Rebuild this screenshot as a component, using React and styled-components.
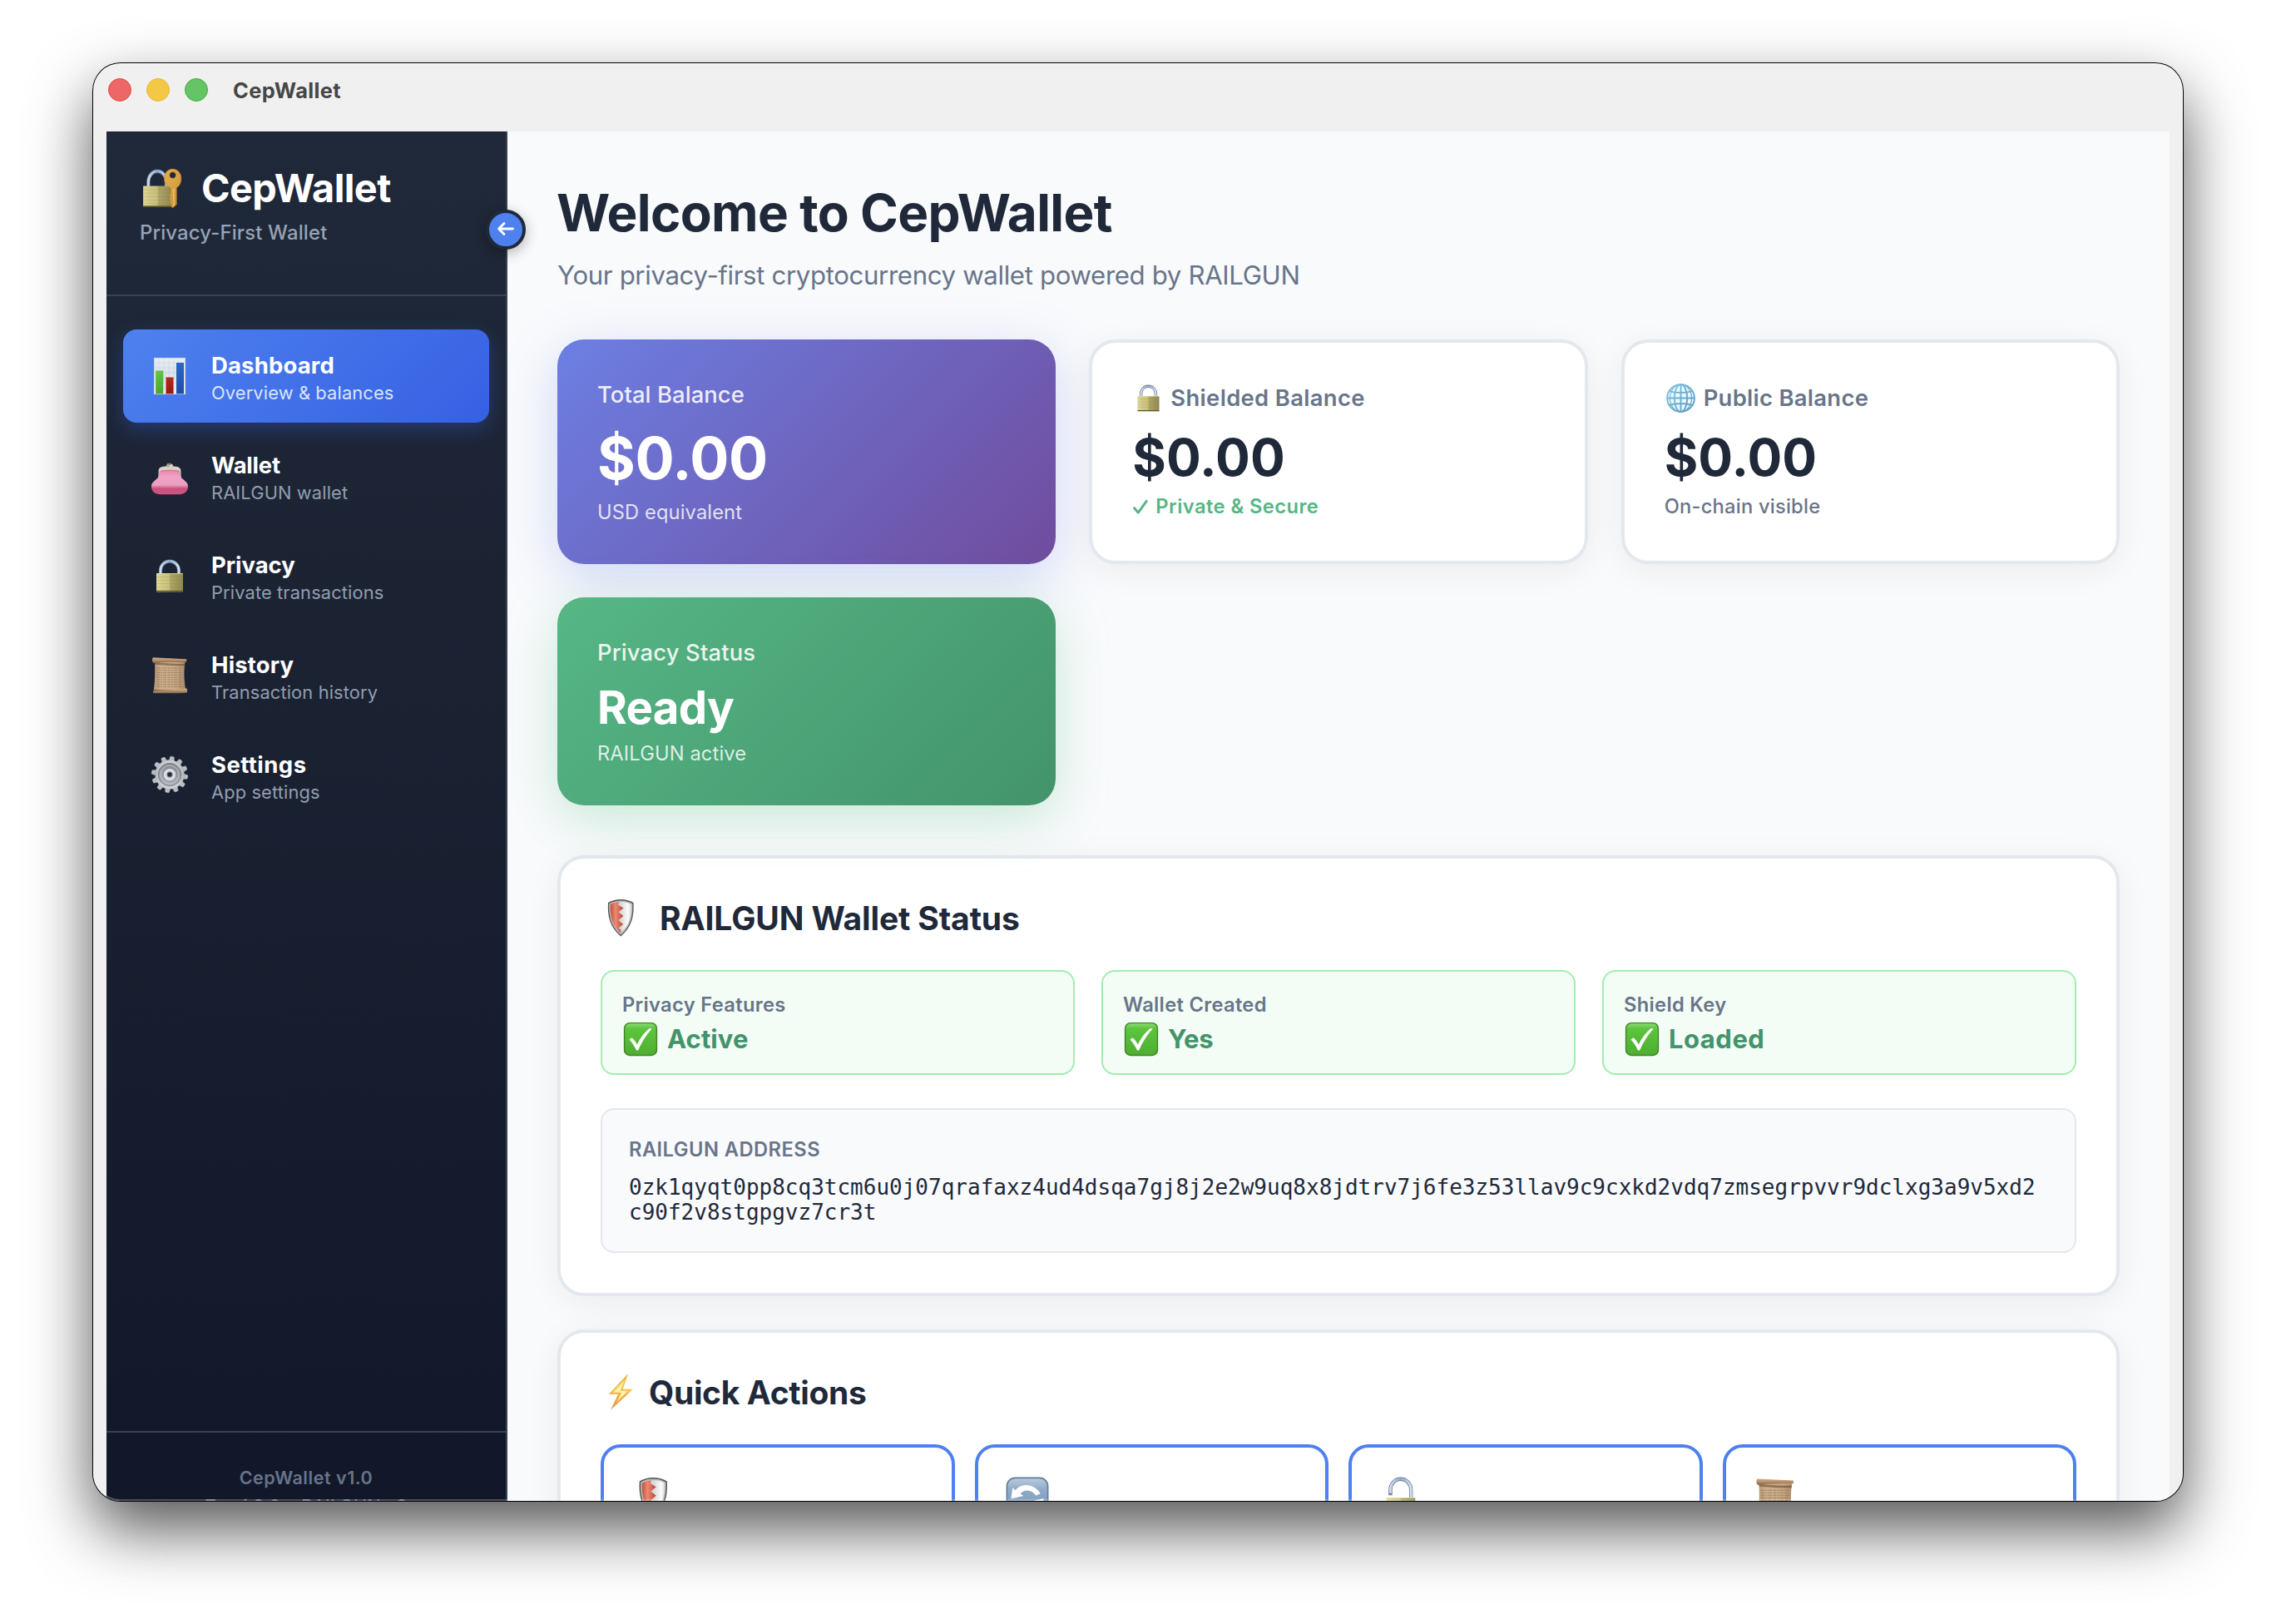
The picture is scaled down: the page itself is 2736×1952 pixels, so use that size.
import React from "react";
import styled, { createGlobalStyle, css } from "styled-components";

const GlobalStyle = createGlobalStyle`
  * { box-sizing: border-box; }
  html, body { margin: 0; padding: 0; background: #fff; }
  body {
    font-family: Inter, "Noto Sans", sans-serif;
    -webkit-font-smoothing: antialiased;
  }
  h1, h2, p { margin: 0; }
  button { font: inherit; }
`;

/* ---------- window ---------- */

const Desktop = styled.div`
  width: 2736px;
  height: 1952px;
  padding: 76px 112px;
  overflow: hidden;
  background: #fff;
`;

const Window = styled.div`
  position: relative;
  width: 2512px;
  height: 1728px;
  border-radius: 33px;
  background: #f0f0f0;
  box-shadow: 0 0 0 1px #000, 0 34px 76px rgba(0, 0, 0, 0.67);
  &::after {
    content: "";
    position: absolute;
    inset: 0;
    border-radius: inherit;
    box-shadow: inset 0 0 0 2px rgba(255, 255, 255, 0.24);
    pointer-events: none;
    z-index: 5;
  }
`;

const WindowClip = styled.div`
  height: 100%;
  overflow: hidden;
  border-radius: inherit;
`;

const TitleBar = styled.header`
  display: flex;
  align-items: flex-start;
  height: 82px;
  padding: 18px 0 0 18px;
`;

const Lights = styled.div`
  display: flex;
  gap: 18px;
  margin-right: 30px;
`;

const Light = styled.span`
  width: 28px;
  height: 28px;
  border-radius: 50%;
  border: 1px solid ${(p) => p.$edge};
  background: ${(p) => p.$fill};
`;

const WindowTitle = styled.div`
  font-size: 25.4px;
  font-weight: 700;
  line-height: 30px;
  letter-spacing: 0.4px;
  color: #464646;
`;

const Body = styled.div`
  display: flex;
  align-items: flex-start;
  padding: 0 16px;
`;

/* ---------- sidebar ---------- */

const Sidebar = styled.aside`
  position: relative;
  z-index: 2;
  display: flex;
  flex: none;
  flex-direction: column;
  width: 482px;
  height: 1692px;
  border-right: 2px solid #374253;
  background: linear-gradient(180deg, #202939 0%, #111728 100%);
`;

const Brand = styled.div`
  height: 198px;
  padding: 40px 40px 0;
  border-bottom: 2px solid #374253;
`;

const BrandRow = styled.div`
  display: flex;
  align-items: center;
  height: 56px;
  gap: 22px;
  margin-left: 2px;
`;

const BrandName = styled.div`
  font-size: 46.8px;
  font-weight: 700;
  line-height: 56px;
  letter-spacing: -0.6px;
  color: #fff;
`;

const BrandTag = styled.div`
  margin-top: 11px;
  font-size: 23.8px;
  font-weight: 500;
  line-height: 30px;
  letter-spacing: 0.2px;
  color: #97a3b6;
`;

const Toggle = styled.button`
  position: absolute;
  top: 94px;
  right: -24px;
  display: flex;
  align-items: center;
  justify-content: center;
  width: 48px;
  height: 48px;
  padding: 0;
  border: 4px solid #202939;
  border-radius: 50%;
  background: #4e80ee;
  box-shadow: 0 4px 16px rgba(0, 0, 0, 0.3);
`;

const Nav = styled.nav`
  display: flex;
  flex: 1;
  flex-direction: column;
  gap: 8px;
  padding: 40px 20px 0;
`;

const NavItem = styled.a`
  display: flex;
  align-items: center;
  gap: 26px;
  height: 112px;
  padding: 0 32px;
  border-radius: 16px;
  ${(p) =>
    p.$active &&
    css`
      background: linear-gradient(135deg, #4e81ee 0%, #3660e3 100%);
      box-shadow: 0 8px 24px rgba(59, 110, 246, 0.3);
    `}
`;

const NavText = styled.div`
  display: flex;
  flex-direction: column;
  height: 112px;
  padding-top: 25px;
`;

const NavLabel = styled.div`
  font-size: 27.4px;
  font-weight: 660;
  line-height: 36px;
  letter-spacing: ${(p) => p.$ls}px;
  color: #fff;
  white-space: nowrap;
`;

const NavHint = styled.div`
  margin-top: 1px;
  font-size: 21.8px;
  font-weight: 430;
  line-height: 28px;
  letter-spacing: 0.15px;
  color: ${(p) => (p.$active ? "#dbe5fb" : "#929db0")};
  white-space: nowrap;
`;

const SideFooter = styled.div`
  height: 130px;
  padding-top: 37px;
  border-top: 2px solid #374253;
  text-align: center;
  font-size: 21.5px;
  line-height: 34px;
  letter-spacing: 0.2px;
  color: #67748a;
`;

const Version = styled.div`
  font-weight: 600;
  letter-spacing: 0.54px;
`;

/* ---------- main ---------- */

const Main = styled.main`
  flex: 1;
  height: 1692px;
  padding: 60px 60px 0;
  background: #f9fafc;
`;

const PageTitle = styled.h1`
  margin-left: -1px;
  font-size: 62px;
  font-weight: 700;
  line-height: 75px;
  letter-spacing: -0.68px;
  color: #202939;
`;

const PageLead = styled.p`
  margin: 18px 0 57px;
  font-size: 31.2px;
  line-height: 40px;
  letter-spacing: -0.36px;
  color: #68758a;
`;

const CardGrid = styled.section`
  display: grid;
  grid-template-columns: repeat(3, 1fr);
  grid-template-rows: 270px 250px;
  gap: 40px;
  margin-bottom: 60px;
`;

const cardTones = {
  plain: css`
    padding: 48px;
    border: 4px solid #e3e8ef;
    background: #fff;
    box-shadow: 0 8px 40px rgba(0, 0, 0, 0.06);
  `,
  purple: css`
    padding: 48px;
    background: linear-gradient(135deg, #6c7fe3 0%, #704c9d 100%);
    box-shadow: 0 16px 64px rgba(102, 126, 234, 0.28);
  `,
  green: css`
    padding: 48px;
    background: linear-gradient(135deg, #56b785 0%, #43936b 100%);
    box-shadow: 0 16px 64px rgba(72, 187, 120, 0.28);
  `,
};

const Card = styled.article`
  border-radius: 32px;
  color: ${(p) => (p.$tone === "plain" ? "#202939" : "#fff")};
  ${(p) => cardTones[p.$tone]}
`;

const CardLabel = styled.div`
  display: flex;
  align-items: center;
  height: 37px;
  font-size: 27.4px;
  line-height: 37px;
  font-weight: ${(p) => (p.$muted ? 620 : 500)};
  letter-spacing: ${(p) => p.$ls}px;
  color: ${(p) => (p.$muted ? "#68758a" : "rgba(255, 255, 255, 0.9)")};
`;

const figureSizes = {
  large: css`
    margin-top: 16px;
    font-size: 70px;
    line-height: 84px;
    letter-spacing: -0.38px;
  `,
  medium: css`
    margin-top: 15px;
    font-size: 62px;
    line-height: 76px;
    letter-spacing: 0.1px;
  `,
  word: css`
    margin-top: 13px;
    font-size: 54.5px;
    line-height: 68px;
    letter-spacing: -0.67px;
  `,
};

const Figure = styled.div`
  font-weight: 700;
  ${(p) => figureSizes[p.$size]}
`;

const noteTones = {
  light: css`
    color: rgba(255, 255, 255, 0.82);
    letter-spacing: 0.12px;
  `,
  good: css`
    color: #56b685;
    font-weight: 620;
    letter-spacing: 0.45px;
  `,
  muted: css`
    color: #68758a;
    font-weight: 500;
    letter-spacing: 0.22px;
  `,
};

const CardNote = styled.div`
  display: flex;
  align-items: center;
  margin-top: ${(p) => p.$gap}px;
  font-size: 23.7px;
  line-height: 30px;
  ${(p) => noteTones[p.$tone]}
`;

const Panel = styled.section`
  height: ${(p) => p.$height}px;
  margin-bottom: 40px;
  padding: 48px;
  border: 4px solid #e3e8ef;
  border-radius: 32px;
  background: #fff;
  box-shadow: 0 8px 40px rgba(0, 0, 0, 0.06);
`;

const PanelTitle = styled.h2`
  display: flex;
  align-items: center;
  gap: ${(p) => p.$gap}px;
  height: 48px;
  margin-bottom: 38px;
  font-size: 39px;
  font-weight: 700;
  line-height: 48px;
  letter-spacing: ${(p) => p.$ls}px;
  color: #202939;
`;

const StatusGrid = styled.div`
  display: grid;
  grid-template-columns: repeat(3, 1fr);
  gap: 32px;
`;

const StatusBox = styled.div`
  height: 126px;
  padding: 24.5px 24px 0;
  border: 2px solid #a3ecb2;
  border-radius: 16px;
  background: #f3fdf5;
`;

const FieldLabel = styled.div`
  font-size: 23.7px;
  font-weight: 600;
  line-height: 30px;
  letter-spacing: ${(p) => p.$ls ?? 0.32}px;
  color: #68758a;
`;

const StatusValue = styled.div`
  display: flex;
  align-items: center;
  gap: 11px;
  height: 40px;
  margin-top: 6px;
  font-size: 31px;
  font-weight: 700;
  line-height: 40px;
  letter-spacing: ${(p) => p.$ls}px;
  color: #43936b;
`;

const AddressBox = styled.div`
  height: 174px;
  margin-top: 40px;
  padding: 32.5px 32px 0;
  border: 2px solid #e3e8ef;
  border-radius: 16px;
  background: #f9fafc;
`;

const Address = styled.div`
  margin-top: 15px;
  font-family: "DejaVu Sans Mono", monospace;
  font-size: 26px;
  line-height: 30px;
  color: #202939;
  white-space: nowrap;
`;

const ActionGrid = styled.div`
  display: grid;
  grid-template-columns: repeat(4, 1fr);
  gap: 24px;
`;

const Action = styled.div`
  display: flex;
  align-items: flex-start;
  height: 200px;
  padding: 35px 33px;
  border: 4px solid #4e80ee;
  border-radius: 24px;
  background: #fff;
`;

/* ---------- icons ---------- */

const Glyph = styled.svg`
  display: block;
  flex: none;
  width: ${(p) => p.$size}px;
  height: ${(p) => p.$size}px;
  margin: ${(p) => p.$margin ?? "0"};
  overflow: visible;
`;

const Icon = ({ size = 48, margin, children }) => (
  <Glyph viewBox="0 0 48 48" $size={size} $margin={margin} aria-hidden="true">
    {children}
  </Glyph>
);

const Gradients = styled.svg`
  position: absolute;
  width: 0;
  height: 0;
`;

const Defs = () => (
  <Gradients>
    <defs>
      <linearGradient id="brass" x1="0" x2="1" y1="0" y2="0">
        <stop offset="0" stopColor="#e0d996" />
        <stop offset="0.2" stopColor="#d3ca86" />
        <stop offset="0.48" stopColor="#c8c07c" />
        <stop offset="0.52" stopColor="#aea668" />
        <stop offset="1" stopColor="#8f8850" />
      </linearGradient>
      <linearGradient id="steel" x1="0" x2="1" y1="0" y2="0">
        <stop offset="0" stopColor="#c9dcf0" />
        <stop offset="0.5" stopColor="#8fa9d0" />
        <stop offset="1" stopColor="#d5e2f2" />
      </linearGradient>
      <linearGradient id="gold" x1="0" x2="1" y1="0" y2="1">
        <stop offset="0" stopColor="#e2ae4c" />
        <stop offset="0.5" stopColor="#d8a344" />
        <stop offset="1" stopColor="#c18730" />
      </linearGradient>
      <linearGradient id="paper" x1="0" x2="0" y1="0" y2="1">
        <stop offset="0" stopColor="#e9eef3" />
        <stop offset="0.4" stopColor="#dbe3ec" />
        <stop offset="1" stopColor="#eef2f6" />
      </linearGradient>
      <linearGradient id="barGreen" x1="0" x2="0" y1="0" y2="1">
        <stop offset="0" stopColor="#5fc543" />
        <stop offset="1" stopColor="#4da233" />
      </linearGradient>
      <linearGradient id="barRed" x1="0" x2="0" y1="0" y2="1">
        <stop offset="0" stopColor="#b62a1d" />
        <stop offset="1" stopColor="#98180f" />
      </linearGradient>
      <linearGradient id="barBlue" x1="0" x2="0" y1="0" y2="1">
        <stop offset="0" stopColor="#2c68c8" />
        <stop offset="1" stopColor="#1d4da4" />
      </linearGradient>
      <linearGradient id="purse" x1="0" x2="0" y1="0" y2="1">
        <stop offset="0" stopColor="#e887ac" />
        <stop offset="0.3" stopColor="#f0a2c6" />
        <stop offset="0.62" stopColor="#eba0c0" />
        <stop offset="0.76" stopColor="#c9527f" />
        <stop offset="1" stopColor="#cf5583" />
      </linearGradient>
      <linearGradient id="parchment" x1="0" x2="1" y1="0" y2="0">
        <stop offset="0" stopColor="#b39474" />
        <stop offset="0.25" stopColor="#cfb08d" />
        <stop offset="0.7" stopColor="#c9a985" />
        <stop offset="1" stopColor="#a98765" />
      </linearGradient>
      <linearGradient id="roll" x1="0" x2="0" y1="0" y2="1">
        <stop offset="0" stopColor="#d0ae88" />
        <stop offset="0.5" stopColor="#b99169" />
        <stop offset="1" stopColor="#7f6247" />
      </linearGradient>
      <linearGradient id="gear" x1="0" x2="0" y1="0" y2="1">
        <stop offset="0" stopColor="#cdd0d5" />
        <stop offset="0.5" stopColor="#b6bac0" />
        <stop offset="1" stopColor="#d0d3d8" />
      </linearGradient>
      <linearGradient id="gearDish" x1="0" x2="0" y1="0" y2="1">
        <stop offset="0" stopColor="#84898f" />
        <stop offset="1" stopColor="#b0b4ba" />
      </linearGradient>
      <linearGradient id="shieldRed" x1="0" x2="1" y1="0" y2="0">
        <stop offset="0" stopColor="#c4513c" />
        <stop offset="0.4" stopColor="#ec8a74" />
        <stop offset="1" stopColor="#b84430" />
      </linearGradient>
      <linearGradient id="shieldWhite" x1="0" x2="1" y1="0" y2="0">
        <stop offset="0" stopColor="#b4b7bb" />
        <stop offset="0.5" stopColor="#d6d8db" />
        <stop offset="0.85" stopColor="#fbfbfb" />
        <stop offset="1" stopColor="#dedede" />
      </linearGradient>
      <linearGradient id="tick" x1="0" x2="0" y1="0" y2="1">
        <stop offset="0" stopColor="#8bdb73" />
        <stop offset="0.16" stopColor="#5cc53e" />
        <stop offset="1" stopColor="#4fae30" />
      </linearGradient>
      <linearGradient id="bolt" x1="0" x2="0" y1="0" y2="1">
        <stop offset="0" stopColor="#f0ac45" />
        <stop offset="0.45" stopColor="#f4c648" />
        <stop offset="0.6" stopColor="#ef9f3c" />
        <stop offset="1" stopColor="#ee9c44" />
      </linearGradient>
      <linearGradient id="globe" x1="0" x2="1" y1="0" y2="1">
        <stop offset="0" stopColor="#7fc4e4" />
        <stop offset="1" stopColor="#5799bd" />
      </linearGradient>
      <linearGradient id="tile" x1="0" x2="0" y1="0" y2="1">
        <stop offset="0" stopColor="#b9c9dc" />
        <stop offset="0.3" stopColor="#8ea8c6" />
        <stop offset="1" stopColor="#7a99bd" />
      </linearGradient>
    </defs>
  </Gradients>
);

const LockBody = () => (
  <>
    <rect x="8" y="21" width="32" height="22.5" rx="0.8" fill="url(#brass)" />
    <path d="M8 25.5h32M8 29.5h32M8 33.5h32M8 37.5h32" stroke="#7d7740" strokeOpacity="0.22" strokeWidth="0.8" />
    <path d="M8 42.6h32" stroke="#5f5a2c" strokeWidth="1.6" />
    <path d="M8 21.5h32" stroke="#eee9b4" strokeOpacity="0.7" strokeWidth="0.9" />
  </>
);

const Lock = (props) => (
  <Icon {...props}>
    <path d="M13 22V17.5a11 11 0 0 1 22 0V22" fill="none" stroke="#65718a" strokeWidth="4.2" />
    <path d="M13 22V17.5a11 11 0 0 1 22 0V22" fill="none" stroke="url(#steel)" strokeWidth="2.8" />
    <LockBody />
  </Icon>
);

const OpenLock = (props) => (
  <Icon {...props}>
    <path d="M12.4 20.5V14.5a11.4 12 0 0 1 22.800 0V23" fill="none" stroke="#65718a" strokeWidth="4" />
    <path d="M12.4 19.8V14.5a11.4 12 0 0 1 22.800 0V23" fill="none" stroke="url(#steel)" strokeWidth="2.7" />
    <path d="M11.200 18.500l2.400 1" stroke="#5a6070" strokeWidth="1.200" />
    <rect x="8" y="23" width="32" height="22" rx="0.8" fill="url(#brass)" />
    <path d="M8 23.6h32" stroke="#eee9b4" strokeOpacity="0.7" strokeWidth="1" />
  </Icon>
);

const LockKey = (props) => (
  <Icon {...props}>
    <path d="M8 23V17a10.4 12.4 0 0 1 20.8 0V23" fill="none" stroke="#65718a" strokeWidth="4.2" />
    <path d="M8 23V17a10.4 12.4 0 0 1 20.8 0V23" fill="none" stroke="url(#steel)" strokeWidth="2.8" />
    <rect x="2" y="21.5" width="34" height="24.5" rx="0.6" fill="url(#brass)" />
    <path d="M2 26h34M2 30h34M2 34h34M2 38h34M2 41.5h34" stroke="#7d7740" strokeOpacity="0.22" strokeWidth="0.8" />
    <path d="M2 45.2h34" stroke="#5f5a2c" strokeWidth="1.6" />
    <g fill="url(#gold)" stroke="#a8742a" strokeWidth="0.6">
      <path
        fillRule="evenodd"
        d="M36 2c5.700 0 10 4.800 10 11 0 5.200-2.400 9.200-5.400 10.800V43L36 47l-2.500-3 .8-2-2.600-1.500 2.300-2.200-2.400-1.600 2.300-2.300-1.900-1.700 1.600-2V23.800C28.800 22 26.300 18 26.300 13 26.300 6.800 30.400 2 36 2Zm.1 3.600a3.600 3.600 0 1 0 0 7.200 3.600 3.600 0 0 0 0-7.200Z"
      />
    </g>
    <path d="M37.300 25v20" stroke="#f0c66a" strokeWidth="1.300" />
  </Icon>
);

const Chart = (props) => (
  <Icon {...props}>
    <rect x="5" y="2" width="38" height="44" fill="url(#paper)" />
    <path d="M5 8h38M5 14h38M5 20h38M5 26h38M5 32h38M5 38h38M11 2v44M17 2v44M23 2v44M29 2v44M35 2v44" stroke="#b7c4d2" strokeOpacity="0.5" strokeWidth="0.6" />
    <rect x="7.200" y="17.500" width="9" height="28.500" fill="url(#barGreen)" />
    <rect x="19.500" y="25.500" width="9" height="20.500" fill="url(#barRed)" />
    <rect x="32" y="8" width="9" height="38" fill="url(#barBlue)" />
    <path d="M5.400 2.400h37.200v43.200H5.400z" fill="none" stroke="#c4ccd6" strokeWidth="0.800" />
  </Icon>
);

const Purse = (props) => (
  <Icon {...props}>
    <path d="M10.500 19c0-4 1.500-5.300 4-6 6-1.200 13-1.200 19 0 2.500.7 4 2 4 6l.4 7H10.200z" fill="#b9b5a8" />
    <path d="M11 17c1-2.500 3-3 5-3.400 5-.9 11-.9 16 0 2 .4 4 .9 5 3.400l.3 1.600H10.800z" fill="#d9d6cc" />
    <path d="M12.500 17.500c7-1.200 16-1.200 23 0 .3 5.500 1.500 8 4.500 10.500 4.500 3.500 6 5.500 6 9 0 5.500-4.500 9.200-10.500 9.200h-23C6.500 46.200 2 42.500 2 37c0-3.500 1.500-5.500 6-9 3-2.500 4.200-5 4.500-10.500Z" fill="url(#purse)" />
    <path d="M13 18.500c7-1.200 15-1.200 22 0" stroke="#d9668f" strokeOpacity="0.600" strokeWidth="1.200" fill="none" />
    <circle cx="22.400" cy="11.300" r="2.200" fill="#a9a59b" />
    <circle cx="25.600" cy="11.600" r="2.200" fill="#d5d2c8" />
    <circle cx="24" cy="9.600" r="1.400" fill="#6d6a68" />
  </Icon>
);

const Scroll = (props) => (
  <Icon {...props}>
    <path d="M6 7.500h36.500c-1.500 11-1.500 21 .8 34H4.800C6.500 30 6.500 19 6 7.500Z" fill="url(#parchment)" />
    <path
      d="M8.500 15h31M8.500 17.800h30M8.500 20.600h31M8.500 23.400h30M8.500 26.200h31M8.500 29h30M8.500 31.800h31M8.500 34.600h30M8.500 37.400h31"
      stroke="#6f5339"
      strokeOpacity="0.480"
      strokeWidth="1"
      strokeDasharray="3.500 1 2 .8 4.500 1.200"
    />
    <path d="M6 9.500c12 .8 26 2.200 36.500 1.400" stroke="#5f4229" strokeOpacity="0.550" strokeWidth="2.400" fill="none" />
    <path d="M4.200 2.200c13 .6 26 1.100 40 2v3.500c-13 .2-27-.1-39.500 1.300C2.600 7.500 2.500 3.500 4.200 2.200Z" fill="url(#roll)" />
    <path d="M4.200 42.300c12-.6 28-.8 40.200-3l1 3.200-1 2.300c-13 .8-28 .6-40.400.2Z" fill="url(#roll)" />
  </Icon>
);

const gearTeeth = Array.from({ length: 12 }, (_, i) => i * 30 + 8);

const Gear = (props) => (
  <Icon {...props}>
    <g fill="url(#gear)" stroke="#8b9096" strokeWidth="0.500">
      {gearTeeth.map((a) => (
        <path key={a} transform={`rotate(${a} 24 23)`} d="M20.600 7l1.100-5.600q2.300-.8 4.600 0l1.100 5.600z" />
      ))}
      <circle cx="24" cy="23" r="17.400" />
    </g>
    <circle cx="24" cy="23" r="17" fill="url(#gear)" />
    <circle cx="24" cy="23" r="13.600" fill="url(#gearDish)" stroke="#70757b" strokeWidth="0.900" />
    <circle cx="24" cy="23" r="11" fill="none" stroke="#c0c4c9" strokeWidth="1" />
    <circle cx="24" cy="23.300" r="7.800" fill="#dadde1" stroke="#7c8187" strokeWidth="0.800" />
    <circle cx="24" cy="23" r="3.200" fill="#232a3b" stroke="#7f858c" strokeWidth="1" />
  </Icon>
);

const Shield = (props) => (
  <Icon {...props}>
    <path d="M24.200 1c5.600 0 10.800 1.300 15.300 4 .9 16.500-2.200 29.500-15.300 40.500C11.200 34.500 8 21.500 9 5c4.500-2.700 9.600-4 15.200-4Z" fill="#56534f" />
    <path d="M24.200 2.400c5.200 0 9.900 1.200 14 3.500.7 15.600-2.200 27.700-14 37.800C12.500 33.600 9.600 21.500 10.300 5.900c4-2.300 8.700-3.500 13.900-3.500Z" fill="#bcbcbc" />
    <path d="M24.200 4c4.700 0 8.900 1 12.500 3 .6 14.300-2 25.300-12.500 34.700C13.800 32.300 11.200 21.300 11.800 7c3.600-2 7.700-3 12.400-3Z" fill="url(#shieldWhite)" />
    <path d="M22 4.100l-1 3.300 6.500 4-6 4.800 6 4.900-6 4.900 5.600 5-5.600 4.600 3 2-.3 4.100C13.800 32.300 11.200 21.300 11.800 7c3-1.700 6.500-2.700 10.200-2.900Z" fill="url(#shieldRed)" />
  </Icon>
);

const Bolt = (props) => (
  <Icon {...props}>
    <path d="M33 1 9.800 25.800h11.400L11.800 45 38.800 19.800H26.700Z" fill="url(#bolt)" />
    <path d="M29.300 8 14.500 24h10.200l-6 12L33.600 21.700H23.600Z" fill="#fbe98c" />
    <path d="M27.500 12 17.600 23h8.800l-3.400 6.600L30.500 22.400H22.600Z" fill="#fff5c4" />
  </Icon>
);

const Globe = (props) => (
  <Icon {...props}>
    <circle cx="24" cy="24" r="21.500" fill="#eef8fd" />
    <g fill="none" stroke="url(#globe)" strokeWidth="2.400">
      <circle cx="24" cy="24" r="21.300" />
      <ellipse cx="24" cy="24" rx="10" ry="21.300" />
      <ellipse cx="24" cy="24" rx="17" ry="21.300" strokeWidth="1.600" />
      <path d="M24.010 2.500v43M3 24h42.010M6 13c10 3.500 26 3.500 36 0M6 35c10-3.500 26-3.500 36 0" />
    </g>
  </Icon>
);

const Tick = (props) => (
  <Icon {...props}>
    <rect x="1" y="1" width="46" height="46" rx="8" fill="#3c8424" />
    <rect x="2.600" y="2.600" width="42.800" height="42.800" rx="6.800" fill="url(#tick)" />
    <path d="M8.500 24.500l3.600-2.400c2.800 2.500 5 5.400 7.200 9.200 4.100-8.600 9.300-15.600 16.500-21.800h3.900C31.300 19 25.300 28.600 20.800 39.500h-2.500C15.800 33.800 12.800 29 8.500 24.500Z" fill="#fff" />
  </Icon>
);

const Refresh = (props) => (
  <Icon {...props}>
    <rect x="0.500" y="0.500" width="47" height="47" rx="10" fill="#5f7c9d" />
    <rect x="2" y="2" width="44" height="44" rx="8.600" fill="url(#tile)" />
    <path d="M6 24.500 7.500 12.500l3.300 2.400c6.600-8.400 20.200-7.800 27.700 3.600l-4.800 2.600C28.600 14 20.500 13.300 16.200 18.800l3.400 2.400z" fill="#fff" />
    <path d="M42 24 40.500 36l-3.300-2.400C30.600 42 17 41.400 9.500 30l4.800-2.600c5.100 7.100 13.200 7.800 17.500 2.300l-3.400-2.400z" fill="#fff" />
  </Icon>
);

const ArrowLeft = () => (
  <Icon size={24} margin="0 0 2px">
    <path d="M41 24H8M20 11 7 24l13 13" fill="none" stroke="#fff" strokeWidth="5.600" strokeLinecap="round" strokeLinejoin="round" />
  </Icon>
);

const SmallCheck = () => (
  <Icon size={19} margin="0 8px 0 1px">
    <path d="M4 27 16 41 41 6" fill="none" stroke="currentColor" strokeWidth="7.500" strokeLinecap="round" strokeLinejoin="round" />
  </Icon>
);

/* ---------- content ---------- */

const navItems = [
  { icon: Chart, label: "Dashboard", hint: "Overview & balances", ls: 0.22, active: true },
  { icon: Purse, label: "Wallet", hint: "RAILGUN wallet", ls: -0.2 },
  { icon: Lock, label: "Privacy", hint: "Private transactions", ls: 0 },
  { icon: Scroll, label: "History", hint: "Transaction history", ls: 0.2 },
  { icon: Gear, label: "Settings", hint: "App settings", ls: 0.5 },
];

const statuses = [
  { label: "Privacy Features", value: "Active", ls: 0.11 },
  { label: "Wallet Created", value: "Yes", ls: -0.3 },
  { label: "Shield Key", value: "Loaded", ls: 0.5 },
];

const actions = [Shield, Refresh, OpenLock, Scroll];

export default function App() {
  return (
    <Desktop>
      <GlobalStyle />
      <Defs />
      <Window>
        <WindowClip>
          <TitleBar>
            <Lights>
              <Light $fill="#ec6765" $edge="#e04b48" />
              <Light $fill="#f3c845" $edge="#e9b92c" />
              <Light $fill="#65c466" $edge="#42ab42" />
            </Lights>
            <WindowTitle>CepWallet</WindowTitle>
          </TitleBar>
          <Body>
            <Sidebar>
              <Brand>
                <BrandRow>
                  <LockKey size={50} />
                  <BrandName>CepWallet</BrandName>
                </BrandRow>
                <BrandTag>Privacy-First Wallet</BrandTag>
              </Brand>
              <Nav>
                {navItems.map(({ icon: ItemIcon, label, hint, ls, active }) => (
                  <NavItem key={label} $active={active}>
                    <ItemIcon />
                    <NavText>
                      <NavLabel $ls={ls}>{label}</NavLabel>
                      <NavHint $active={active}>{hint}</NavHint>
                    </NavText>
                  </NavItem>
                ))}
              </Nav>
              <SideFooter>
                <Version>CepWallet v1.0</Version>
                <div>Tauri 2.0 • RAILGUN v9</div>
              </SideFooter>
              <Toggle aria-label="Collapse sidebar">
                <ArrowLeft />
              </Toggle>
            </Sidebar>
            <Main>
              <PageTitle>Welcome to CepWallet</PageTitle>
              <PageLead>Your privacy-first cryptocurrency wallet powered by RAILGUN</PageLead>
              <CardGrid>
                <Card $tone="purple">
                  <CardLabel $ls={0.08}>Total Balance</CardLabel>
                  <Figure $size="large">$0.00</Figure>
                  <CardNote $tone="light" $gap={7.5}>USD equivalent</CardNote>
                </Card>
                <Card $tone="plain">
                  <CardLabel $muted $ls={0.34}>
                    <Lock size={39} margin="0 7px 0 0" />
                    Shielded Balance
                  </CardLabel>
                  <Figure $size="medium">$0.00</Figure>
                  <CardNote $tone="good" $gap={6}>
                    <SmallCheck />
                    Private &amp; Secure
                  </CardNote>
                </Card>
                <Card $tone="plain">
                  <CardLabel $muted $ls={0.3}>
                    <Globe size={37} margin="0 9px 0 1px" />
                    Public Balance
                  </CardLabel>
                  <Figure $size="medium">$0.00</Figure>
                  <CardNote $tone="muted" $gap={6}>On-chain visible</CardNote>
                </Card>
                <Card $tone="green">
                  <CardLabel $ls={0.15}>Privacy Status</CardLabel>
                  <Figure $size="word">Ready</Figure>
                  <CardNote $tone="light" $gap={6.5}>RAILGUN active</CardNote>
                </Card>
              </CardGrid>
              <Panel $height={530}>
                <PanelTitle $gap={23} $ls={-0.12}>
                  <Shield />
                  RAILGUN Wallet Status
                </PanelTitle>
                <StatusGrid>
                  {statuses.map((s) => (
                    <StatusBox key={s.label}>
                      <FieldLabel>{s.label}</FieldLabel>
                      <StatusValue $ls={s.ls}>
                        <Tick size={42} margin="0 0 0 1px" />
                        {s.value}
                      </StatusValue>
                    </StatusBox>
                  ))}
                </StatusGrid>
                <AddressBox>
                  <FieldLabel $ls={0.46}>RAILGUN ADDRESS</FieldLabel>
                  <Address>
                    0zk1qyqt0pp8cq3tcm6u0j07qrafaxz4ud4dsqa7gj8j2e2w9uq8x8jdtrv7j6fe3z53llav9c9cxkd2vdq7zmsegrpvvr9dclxg3a9v5xd2
                    <br />
                    c90f2v8stgpgvz7cr3t
                  </Address>
                </AddressBox>
              </Panel>
              <Panel $height={530}>
                <PanelTitle $gap={10} $ls={-0.35}>
                  <Bolt />
                  Quick Actions
                </PanelTitle>
                <ActionGrid>
                  {actions.map((ActionIcon, i) => (
                    <Action key={i}>
                      <ActionIcon size={52} />
                    </Action>
                  ))}
                </ActionGrid>
              </Panel>
            </Main>
          </Body>
        </WindowClip>
      </Window>
    </Desktop>
  );
}
